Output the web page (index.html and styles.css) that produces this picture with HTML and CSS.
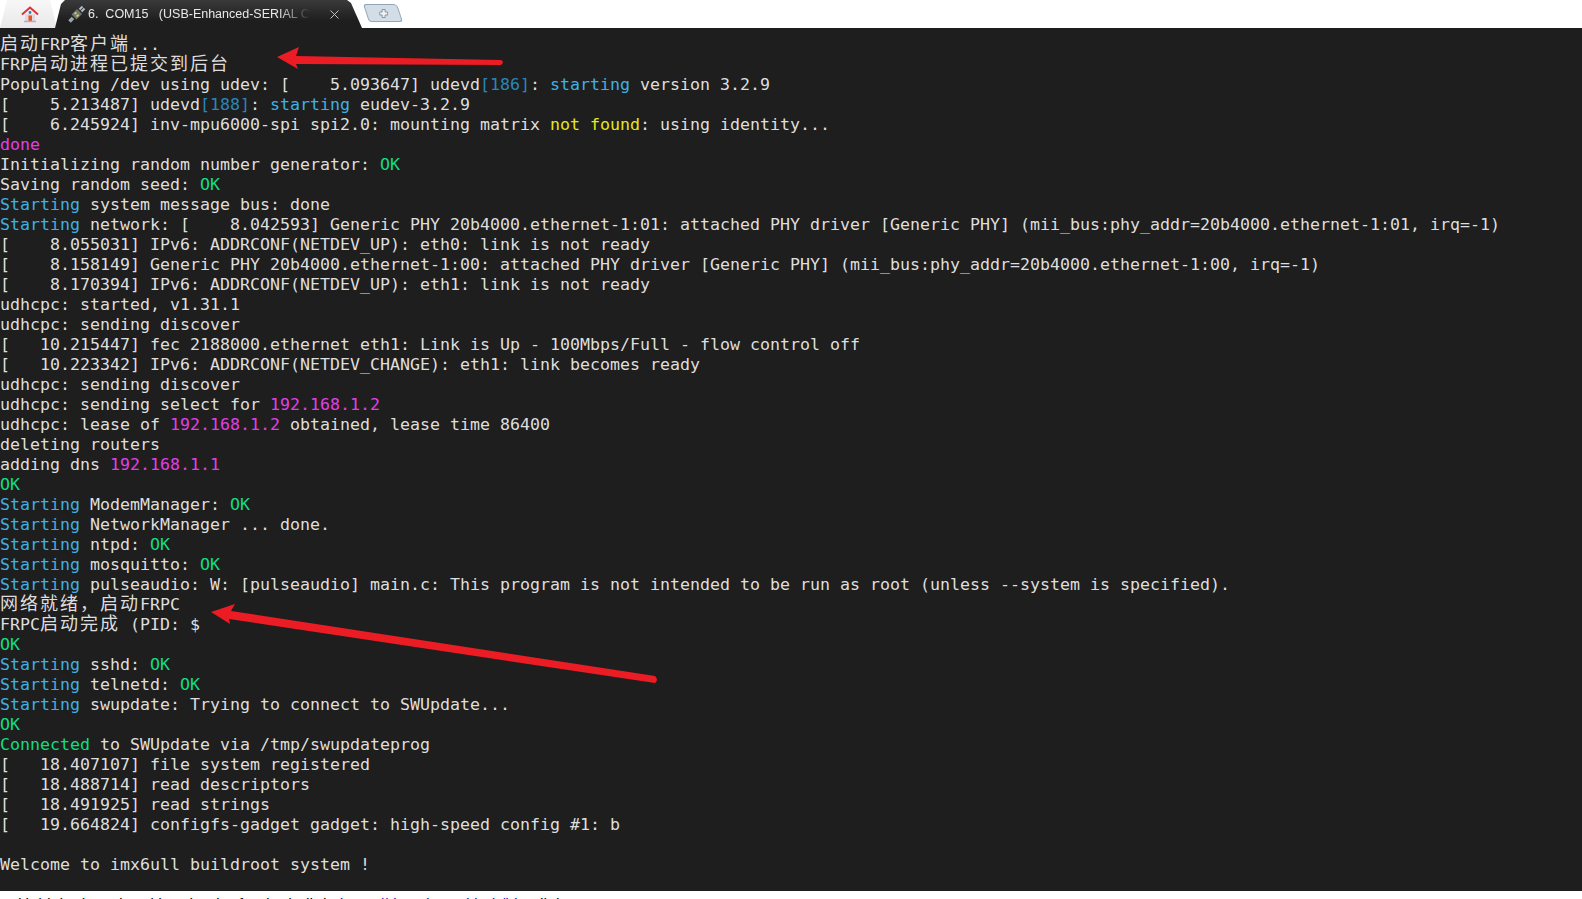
FILE: index.html
```html
<!DOCTYPE html>
<html lang="zh-CN">
<head>
<meta charset="utf-8">
<title>COM15</title>
<link rel="stylesheet" href="styles.css">
</head>
<body>
<div class="tabbar">
  <div class="tab-home">
    <svg class="home-icon" width="18" height="18" viewBox="0 0 18 18"><path d="M4 9h10v7.500H4z" fill="#e3d9de"/><path d="M7.500 10.500h3.500v6H7.500z" fill="#e8571f"/><circle cx="9" cy="7.500" r="1.400" fill="#2f7fb8"/><path d="M1 9.500 9 2.500l8 7" fill="none" stroke="#d8343a" stroke-width="2"/><path d="M3 16.500h12" stroke="#b9a8d8" stroke-width="1.500"/></svg>
  </div>
  <div class="tab-active">
    <svg class="usb-icon" width="17" height="17" viewBox="0 0 17 17"><path d="M1.500 15.500 5 12" stroke="#9aa4a9" stroke-width="3.500"/><path d="M3.500 8.500 9 3l5 5-5.500 5.500z" fill="#69757b"/><path d="M11.500 3.500l3-3M13.500 5.500l3-3" stroke="#b4bcc0" stroke-width="2"/><path d="M6.500 8l2-1.500M8.500 10.500l2.200-1.700" stroke="#f2c21a" stroke-width="2"/></svg>
    <span class="tab-title">6.&nbsp; COM15 &nbsp; (USB-Enhanced-SERIAL C</span>
    <svg class="tab-close" width="11" height="11" viewBox="0 0 11 11"><path d="M1.500 1.500l8 8M9.500 1.500l-8 8" stroke="#c4c4c4" stroke-width="1"/></svg>
  </div>
  <div class="tab-new">
    <svg width="9" height="9" viewBox="0 0 9 9"><path d="M3 .5h3v2.500h2.500v3H6v2.500H3V6H.5V3H3z" fill="#eef2f6" stroke="#8a939c"/></svg>
  </div>
</div>
<main class="term">
<div class="ln"><span class="cjk">启动</span>FRP<span class="cjk">客户端</span>...</div>
<div class="ln">FRP<span class="cjk">启动进程已提交到后台</span></div>
<div class="ln">Populating /dev using udev: [    5.093647] udevd<span class="db">[186]</span>: <span class="bl">starting</span> version 3.2.9</div>
<div class="ln">[    5.213487] udevd<span class="db">[188]</span>: <span class="bl">starting</span> eudev-3.2.9</div>
<div class="ln">[    6.245924] inv-mpu6000-spi spi2.0: mounting matrix <span class="ye">not found</span>: using identity...</div>
<div class="ln mg">done</div>
<div class="ln">Initializing random number generator: <span class="gr">OK</span></div>
<div class="ln">Saving random seed: <span class="gr">OK</span></div>
<div class="ln"><span class="bl">Starting</span> system message bus: done</div>
<div class="ln"><span class="bl">Starting</span> network: [    8.042593] Generic PHY 20b4000.ethernet-1:01: attached PHY driver [Generic PHY] (mii_bus:phy_addr=20b4000.ethernet-1:01, irq=-1)</div>
<div class="ln">[    8.055031] IPv6: ADDRCONF(NETDEV_UP): eth0: link is not ready</div>
<div class="ln">[    8.158149] Generic PHY 20b4000.ethernet-1:00: attached PHY driver [Generic PHY] (mii_bus:phy_addr=20b4000.ethernet-1:00, irq=-1)</div>
<div class="ln">[    8.170394] IPv6: ADDRCONF(NETDEV_UP): eth1: link is not ready</div>
<div class="ln">udhcpc: started, v1.31.1</div>
<div class="ln">udhcpc: sending discover</div>
<div class="ln">[   10.215447] fec 2188000.ethernet eth1: Link is Up - 100Mbps/Full - flow control off</div>
<div class="ln">[   10.223342] IPv6: ADDRCONF(NETDEV_CHANGE): eth1: link becomes ready</div>
<div class="ln">udhcpc: sending discover</div>
<div class="ln">udhcpc: sending select for <span class="mg">192.168.1.2</span></div>
<div class="ln">udhcpc: lease of <span class="mg">192.168.1.2</span> obtained, lease time 86400</div>
<div class="ln">deleting routers</div>
<div class="ln">adding dns <span class="mg">192.168.1.1</span></div>
<div class="ln gr">OK</div>
<div class="ln"><span class="bl">Starting</span> ModemManager: <span class="gr">OK</span></div>
<div class="ln"><span class="bl">Starting</span> NetworkManager ... done.</div>
<div class="ln"><span class="bl">Starting</span> ntpd: <span class="gr">OK</span></div>
<div class="ln"><span class="bl">Starting</span> mosquitto: <span class="gr">OK</span></div>
<div class="ln"><span class="bl">Starting</span> pulseaudio: W: [pulseaudio] main.c: This program is not intended to be run as root (unless --system is specified).</div>
<div class="ln"><span class="cjk">网络就绪，启动</span>FRPC</div>
<div class="ln">FRPC<span class="cjk">启动完成</span> (PID: $</div>
<div class="ln gr">OK</div>
<div class="ln"><span class="bl">Starting</span> sshd: <span class="gr">OK</span></div>
<div class="ln"><span class="bl">Starting</span> telnetd: <span class="gr">OK</span></div>
<div class="ln"><span class="bl">Starting</span> swupdate: Trying to connect to SWUpdate...</div>
<div class="ln gr">OK</div>
<div class="ln"><span class="gr">Connected</span> to SWUpdate via /tmp/swupdateprog</div>
<div class="ln">[   18.407107] file system registered</div>
<div class="ln">[   18.488714] read descriptors</div>
<div class="ln">[   18.491925] read strings</div>
<div class="ln">[   19.664824] configfs-gadget gadget: high-speed config #1: b</div>
<div class="ln"></div>
<div class="ln">Welcome to imx6ull buildroot system !</div>
</main>
<svg class="arrows" width="1582" height="899" viewBox="0 0 1582 899">
  <path d="M277 57 L299 47 L296 56 L501 60 Q505 62 501 65 L296 64 L298 69 Z" fill="#ec1c24"/>
  <path d="M211 612 L235 604 L231 611 L655 676 Q659 680 655 683 L229 619 L230 624 Z" fill="#ec1c24"/>
</svg>
<footer class="below">    Hold the board and bootloader for the built-in <span class="lnk">https://docs.kernel.hub/blog</span> link</footer>
</body>
</html>
```
FILE: styles.css
```css
html, body { margin: 0; padding: 0; }
body {
  width: 1582px;
  height: 899px;
  overflow: hidden;
  background: #fff;
  display: flex;
  flex-direction: column;
  position: relative;
}
.tabbar {
  height: 28px;
  flex: none;
  display: flex;
  align-items: flex-start;
  background: #fff;
}
.tab-home {
  width: 57px;
  height: 28px;
  flex: none;
  display: flex;
  justify-content: center;
  padding-top: 5px;
  box-sizing: border-box;
  background: linear-gradient(#f7f7f7, #e9e9e9);
  clip-path: polygon(0 100%, 7px 0, 50px 0, 57px 100%);
}
.home-icon { display: block; margin-left: 3px; }
.tab-active {
  width: 307px;
  height: 28px;
  flex: none;
  margin-left: -2px;
  display: flex;
  align-items: center;
  box-sizing: border-box;
  padding-left: 13px;
  background: linear-gradient(#3a3a3a, #1e1e1e 75%);
  clip-path: polygon(0 100%, 6px 4px, 10px 0, 292px 0, 296px 3px, 307px 100%);
}
.usb-icon { flex: none; display: block; }
.tab-title {
  width: 224px;
  margin-left: 3px;
  flex: none;
  overflow: hidden;
  white-space: pre;
  font: 12.5px/28px "Liberation Sans", Arial, sans-serif;
  color: #e8e8e8;
  -webkit-mask-image: linear-gradient(90deg, #000 190px, transparent 222px);
  mask-image: linear-gradient(90deg, #000 190px, transparent 222px);
}
.tab-close { flex: none; display: block; margin-left: 17px; }
.tab-new {
  width: 34px;
  height: 18px;
  flex: none;
  margin: 4px 0 0 4px;
  display: flex;
  align-items: center;
  justify-content: center;
  box-sizing: border-box;
  border: 1px solid #93a6b8;
  border-radius: 3px 4px 3px 3px;
  background: #d3dde8;
  transform: skewX(18deg);
}
.tab-new svg { transform: skewX(-18deg); }
.term {
  height: 863px;
  flex: none;
  box-sizing: border-box;
  padding-top: 7px;
  background: #1e1e1e;
  color: #dedede;
  font-family: "DejaVu Sans Mono", monospace;
  font-size: 16.63px;
  overflow: hidden;
}
.ln {
  height: 20px;
  line-height: 20px;
  white-space: pre;
}
.cjk {
  font-family: "Noto Sans CJK SC", sans-serif;
  font-size: 18px;
  letter-spacing: 2px;
  line-height: 0;
}
.bl { color: #3fb0e6; }
.db { color: #2b86b8; }
.gr { color: #13dc80; }
.mg { color: #e23fe6; }
.ye { color: #e6e619; }
.arrows {
  position: absolute;
  left: 0;
  top: 0;
  pointer-events: none;
}
.below {
  height: 8px;
  flex: none;
  overflow: hidden;
  white-space: pre;
  font: 16px/27px "Liberation Sans", Arial, sans-serif;
  color: #111;
}
.lnk { color: #1a1ae0; }
```
